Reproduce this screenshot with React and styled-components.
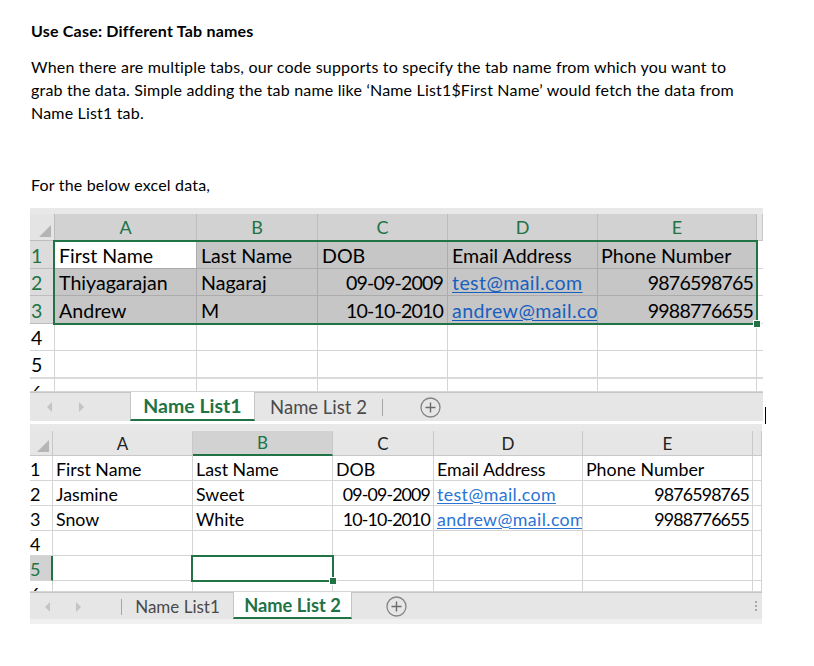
import React from 'react';
import styled, {createGlobalStyle} from 'styled-components';

const GREEN = '#217346';
const FONT = 'Lato, "Open Sans", "Noto Sans", sans-serif';

const Global = createGlobalStyle`
  body {
    margin: 0;
    background: #fff;
    font-family: ${FONT};
    color: #000;
  }
`;

const Page = styled.div`
  width: 814px;
  box-sizing: border-box;
  padding: 22px 0 0 30px;
`;

const Title = styled.div`
  margin-left: 1px;
  font-size: 16px;
  font-weight: 700;
  letter-spacing: 0.2px;
  line-height: 18px;
`;

const Para = styled.p`
  margin: ${p => p.$top}px 0 0 1px;
  font-size: 16px;
  letter-spacing: 0.18px;
  line-height: 23px;
  white-space: nowrap;
`;

const SheetRow = styled.div`
  display: flex;
  align-items: flex-end;
  margin-top: ${p => p.$top || 0}px;
`;

const Caret = styled.div`
  width: 1px;
  height: 17px;
  margin: 0 0 -3px 2px;
  background: #000;
`;

const Sheet = styled.div`
  width: ${p => p.$w}px;
  display: flex;
  flex-direction: column;
  background: #fff;
`;

const Strip = styled.div`
  height: ${p => p.$h}px;
  background: ${p => p.$bg || '#e8e8e8'};
`;

const Grid = styled.div`
  display: grid;
  grid-template-columns: ${p => p.$cols.map(c => c + 'px').join(' ')};
  grid-template-rows: ${p => p.$rows.map(r => r + 'px').join(' ')};
  overflow: hidden;
`;

const Cell = styled.div`
  grid-row: ${p => p.$r};
  grid-column: ${p => p.$c};
  box-sizing: border-box;
  display: flex;
  align-items: center;
  justify-content: ${p => (p.$align === 'right' ? 'flex-end' : p.$align === 'center' ? 'center' : 'flex-start')};
  padding: 1px ${p => p.$pad}px 0;
  overflow: hidden;
  white-space: nowrap;
  font-size: ${p => p.$fs}px;
  letter-spacing: ${p => (p.$align === 'right' ? '-0.85px' : 'normal')};
  color: ${p => p.$color || '#000'};
  background: ${p => p.$bg || '#fff'};
  border-right: 1px solid ${p => p.$line || '#d4d4d4'};
  border-bottom: 1px solid ${p => p.$line || '#d4d4d4'};
  ${p => p.$greenBottom && `border-bottom: 2px solid ${GREEN};`}
  ${p => p.$greenRight && `border-right: 2px solid ${GREEN};`}
  ${p => p.$clip && 'align-items: flex-start; padding-top: 2px;'}
`;

const Link = styled.span`
  color: ${p => p.$color};
  letter-spacing: 0.4px;
  text-decoration: underline;
  text-underline-offset: 2px;
`;

const Corner = styled(Cell)`
  align-items: flex-end;
  justify-content: flex-end;
  padding: 0 3px 3px 0;
`;

const Selection = styled.div`
  grid-row: ${p => p.$r};
  grid-column: ${p => p.$c};
  position: relative;
  margin: -1px -1px -1px -2px;
  border: 2px solid ${GREEN};
  pointer-events: none;
  z-index: 2;
`;

const Handle = styled.div`
  position: absolute;
  right: -5px;
  bottom: -5px;
  width: 6px;
  height: 6px;
  background: ${GREEN};
  border: 1px solid #fff;
`;

const TabBar = styled.div`
  height: ${p => p.$h}px;
  display: flex;
  align-items: stretch;
  background: #e6e6e6;
  border-top: 1px solid #c6c6c6;
  box-sizing: border-box;
`;

const Nav = styled.div`
  width: ${p => p.$w}px;
  display: flex;
  align-items: center;
  gap: ${p => p.$gap}px;
  padding-left: ${p => p.$pl}px;
  box-sizing: border-box;
  border-right: ${p => (p.$sep ? '1px solid #a6a6a6' : 'none')};
  margin: ${p => (p.$sep ? '6px 0 4px' : '0')};
`;

const Tab = styled.div`
  width: ${p => p.$w}px;
  margin-top: ${p => (p.$active ? '-1px' : '0')};
  display: flex;
  align-items: center;
  justify-content: center;
  box-sizing: border-box;
  font-size: ${p => p.$fs}px;
  font-weight: ${p => (p.$active ? 700 : 400)};
  color: ${p => (p.$active ? GREEN : '#4a4a4a')};
  background: ${p => (p.$active ? '#fff' : 'transparent')};
  border-bottom: ${p => (p.$active ? `2px solid ${GREEN}` : 'none')};
  border-left: ${p => (p.$active ? '1px solid #c6c6c6' : 'none')};
  border-right: ${p => (p.$active ? '1px solid #c6c6c6' : 'none')};
`;

const TabSep = styled.div`
  width: 1px;
  margin: 6px 0 5px;
  background: #a6a6a6;
`;

const AddWrap = styled.div`
  display: flex;
  align-items: center;
  margin-left: ${p => p.$ml}px;
`;

const Dots = styled.div`
  margin-left: auto;
  margin-right: 5px;
  display: flex;
  flex-direction: column;
  justify-content: center;
  gap: 2px;
  & > span {
    width: 2px;
    height: 2px;
    background: #a8a8a8;
  }
`;

const Arrow = ({dir}) => (
  <svg width="6" height="10" viewBox="0 0 6 10">
    <path d={dir === 'left' ? 'M5 0 L0 5 L5 10 Z' : 'M1 0 L6 5 L1 10 Z'} fill="#c4c4c4" />
  </svg>
);

const AddIcon = () => (
  <svg width="21" height="21" viewBox="0 0 21 21">
    <circle cx="10.5" cy="10.5" r="9.5" fill="none" stroke="#858585" strokeWidth="1.3" />
    <path d="M10.5 5.5 V15.5 M5.5 10.5 H15.5" stroke="#6b6b6b" strokeWidth="1.4" />
  </svg>
);

const CornerMark = ({size}) => (
  <svg width={size} height={size} viewBox="0 0 10 10">
    <path d="M10 0 L10 10 L0 10 Z" fill="#b5b5b5" />
  </svg>
);

/* ---------- sheet data ---------- */

const s1 = {
  cols: [25, 142, 121, 130, 150, 159, 6],
  rows: [27, 28, 27, 28, 27, 28, 13],
  fs: 19.6,
  data: [
    ['First Name', 'Last Name', 'DOB', 'Email Address', 'Phone Number'],
    ['Thiyagarajan', 'Nagaraj', '09-09-2009', 'test@mail.com', '9876598765'],
    ['Andrew', 'M', '10-10-2010', 'andrew@mail.com', '9988776655'],
  ],
};

const s2 = {
  cols: [23, 140, 140, 101, 149, 170, 9],
  rows: [25, 25, 25, 25, 25, 25, 11],
  fs: 17.8,
  data: [
    ['First Name', 'Last Name', 'DOB', 'Email Address', 'Phone Number'],
    ['Jasmine', 'Sweet', '09-09-2009', 'test@mail.com', '9876598765'],
    ['Snow', 'White', '10-10-2010', 'andrew@mail.com', '9988776655'],
  ],
};

const LETTERS = ['A', 'B', 'C', 'D', 'E'];

const cellContent = (v, c, linkColor) => {
  if (c === 3 && v.includes('@')) return <Link $color={linkColor}>{v}</Link>;
  return v;
};

const alignFor = (r, c) => (r > 0 && (c === 2 || c === 4) ? 'right' : 'left');

const SheetOne = () => {
  const {cols, rows, fs, data} = s1;
  const cells = [];
  cells.push(<Corner key="corner" $r={1} $c={1} $bg="#e4e4e4" $line="#bdbdbd"><CornerMark size={12} /></Corner>);
  LETTERS.forEach((l, i) => cells.push(
    <Cell key={'h' + l} $r={1} $c={i + 2} $align="center" $fs={18} $color={GREEN} $bg="#d2d2d2" $line="#bdbdbd">{l}</Cell>
  ));
  cells.push(<Cell key="hx" $r={1} $c={7} $bg="#e4e4e4" $line="#c8c8c8" $fs={17} />);
  for (let r = 0; r < 6; r++) {
    const sel = r < 3;
    const clip = r === 5;
    cells.push(
      <Cell key={'r' + r} $r={r + 2} $c={1} $pad={1} $fs={19.5} $clip={clip}
        $color={sel ? GREEN : '#000'} $bg={sel ? '#dcdcdc' : '#fff'} $line={sel ? '#bdbdbd' : '#d4d4d4'}
        style={r === 4 ? {borderBottom: '2px solid #dadada'} : undefined}>
        {r + 1}
      </Cell>
    );
    for (let c = 0; c < 6; c++) {
      const v = sel && c < 5 ? data[r][c] : '';
      const selected = sel && c < 5;
      const white = !selected || (r === 0 && c === 0);
      cells.push(
        <Cell key={r + '-' + c} $r={r + 2} $c={c + 2} $fs={fs} $pad={c === 4 ? 3 : 4}
          $align={alignFor(r, c)} $bg={white ? '#fff' : '#c6c6c6'} $line={selected ? '#acacac' : '#d4d4d4'}
          style={r === 4 ? {borderBottom: '2px solid #dadada'} : undefined}>
          {v && cellContent(v, c, '#1860bf')}
        </Cell>
      );
    }
  }
  return (
    <Sheet $w={733}>
      <Strip $h={6} />
      <Grid $cols={cols} $rows={rows}>
        {cells}
        <Selection $r="2 / 5" $c="2 / 7"><Handle /></Selection>
      </Grid>
      <TabBar $h={29}>
        <Nav $w={100} $gap={25} $pl={17}><Arrow dir="left" /><Arrow dir="right" /></Nav>
        <Tab $w={125} $fs={19.5} $active>Name List1</Tab>
        <Tab $w={127} $fs={18.5}>Name List 2</Tab>
        <TabSep />
        <AddWrap $ml={37}><AddIcon /></AddWrap>
      </TabBar>
    </Sheet>
  );
};

const SheetTwo = () => {
  const {cols, rows, fs, data} = s2;
  const cells = [];
  cells.push(<Corner key="corner" $r={1} $c={1} $bg="#e6e6e6" $line="#c8c8c8"><CornerMark size={12} /></Corner>);
  LETTERS.forEach((l, i) => {
    const sel = i === 1;
    cells.push(
      <Cell key={'h' + l} $r={1} $c={i + 2} $align="center" $fs={17} $color={sel ? GREEN : '#222'}
        $bg={sel ? '#d2d2d2' : '#e6e6e6'} $line="#c8c8c8" $greenBottom={sel}>{l}</Cell>
    );
  });
  cells.push(<Cell key="hx" $r={1} $c={7} $bg="#e6e6e6" $line="#c8c8c8" $fs={16} />);
  for (let r = 0; r < 6; r++) {
    const sel = r === 4;
    cells.push(
      <Cell key={'r' + r} $r={r + 2} $c={1} $pad={0} $fs={18} $clip={r === 5}
        $color={sel ? GREEN : '#000'} $bg={sel ? '#d2d2d2' : '#fff'} $greenRight={sel}>
        {r + 1}
      </Cell>
    );
    for (let c = 0; c < 6; c++) {
      const v = r < 3 && c < 5 ? data[r][c] : '';
      cells.push(
        <Cell key={r + '-' + c} $r={r + 2} $c={c + 2} $fs={fs} $pad={3} $align={alignFor(r, c)}>
          {v && cellContent(v, c, '#2a74d6')}
        </Cell>
      );
    }
  }
  return (
    <Sheet $w={732}>
      <Strip $h={7} />
      <Grid $cols={cols} $rows={rows}>
        {cells}
        <Selection $r="6 / 7" $c="3 / 4"><Handle /></Selection>
      </Grid>
      <TabBar $h={27}>
        <Nav $w={92} $gap={24} $pl={15} $sep><Arrow dir="left" /><Arrow dir="right" /></Nav>
        <Tab $w={111} $fs={17}>Name List1</Tab>
        <Tab $w={119} $fs={18.3} $active>Name List 2</Tab>
        <AddWrap $ml={34}><AddIcon /></AddWrap>
        <Dots><span /><span /><span /></Dots>
      </TabBar>
      <Strip $h={5} $bg="#f0f0f0" />
    </Sheet>
  );
};

export default function App() {
  return (
    <Page>
      <Global />
      <Title>Use Case: Different Tab names</Title>
      <Para $top={15}>
        When there are multiple tabs, our code supports to specify the tab name from which you want to<br />
        grab the data. Simple adding the tab name like ‘Name List1$First Name’ would fetch the data from<br />
        Name List1 tab.
      </Para>
      <Para $top={49}>For the below excel data,</Para>
      <SheetRow $top={12}>
        <SheetOne />
        <Caret />
      </SheetRow>
      <SheetRow $top={3}>
        <SheetTwo />
      </SheetRow>
    </Page>
  );
}
